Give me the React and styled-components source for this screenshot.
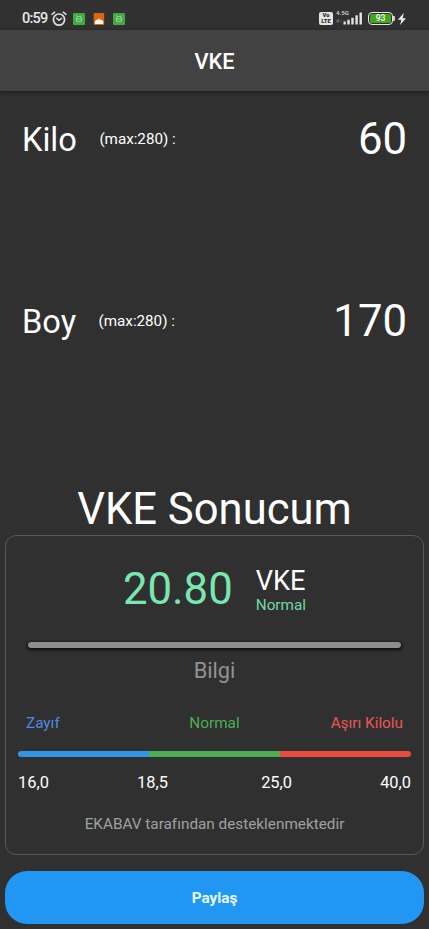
import React from "react";
import styled, { createGlobalStyle } from "styled-components";

const GlobalStyle = createGlobalStyle`
   *{
      box-sizing: border-box;
   }
   body{
      margin: 0;
      background: #303030;
      color: #fff;
      font-family: Roboto, "Noto Sans", sans-serif;
      overflow: hidden;
   }
`;

const Screen = styled.div`
   height: 929px;
   display: flex;
   flex-direction: column;
   background: #303030;
`;

// status bar
const StatusBar = styled.div`
   flex: none;
   height: 30px;
   display: flex;
   justify-content: space-between;
   align-items: center;
   padding: 7px 21px 0 22px;
   background: #313131;
`;

const StatusGroup = styled.div`
   display: flex;
   align-items: center;
   height: 16px;
   svg{
      display: block;
      flex: none;
   }
`;

const Clock = styled.span`
   width: 26px;
   margin-right: 3px;
   font-size: 14.5px;
   font-weight: 500;
   letter-spacing: -0.8px;
   line-height: 16px;
   color: #e8e8e8;
`;

const AppIcon = styled.svg`
   width: 12px;
   height: 12px;
   margin-left: ${(props) => props.$gap}px;
`;

const Volte = styled.div`
   width: 14px;
   height: 13px;
   padding-top: 1px;
   border-radius: 2px;
   background: #e4e4e4;
   color: #2a2a2a;
   font-size: 5.8px;
   font-weight: 900;
   line-height: 5.5px;
   text-align: center;
`;

const Network = styled.div`
   width: 14px;
   height: 15px;
   margin-left: 3px;
   margin-right: -7px;
   font-size: 6.2px;
   font-weight: 500;
   line-height: 5px;
   white-space: nowrap;
   color: #d8d8d8;
   small{
      display: block;
      padding-top: 3px;
      font-size: 5.5px;
      color: #858585;
   }
`;

const Battery = styled.div`
   width: 25px;
   height: 13px;
   margin-left: 5px;
   padding: 1px;
   border: 1.5px solid #e6e6e6;
   border-radius: 4px;
   span{
      display: block;
      height: 9px;
      border-radius: 1.5px;
      background: #43a51c;
      font-size: 8.5px;
      font-weight: 500;
      line-height: 9.5px;
      text-align: center;
   }
`;

const AppBar = styled.header`
   flex: none;
   height: 61px;
   display: flex;
   align-items: center;
   justify-content: center;
   background: #424242;
   box-shadow: 0 1px 4px rgba(0, 0, 0, 0.5);
   font-size: 21.8px;
   font-weight: 500;
   padding-top: 1px;
`;

// inputs
const Field = styled.div`
   flex: none;
   height: 182px;
   display: flex;
   align-items: flex-start;
   padding: 22px 22px 0;
   line-height: 52px;
`;

const FieldName = styled.span`
   padding-top: 1px;
   font-size: 32.6px;
`;

const FieldHint = styled.span`
   margin-left: 22.5px;
   font-size: 15.2px;
`;

const FieldValue = styled.span`
   margin-left: auto;
   font-size: 43.7px;
`;

const Title = styled.h1`
   flex: none;
   margin: 29px 0 0;
   height: 51px;
   font-size: 43.6px;
   font-weight: 400;
   line-height: 51px;
   text-align: center;
`;

// result
const Card = styled.section`
   flex: none;
   height: 320px;
   margin: 0 5px;
   padding: 0 12px;
   border: 1px solid #585858;
   border-radius: 11px;
`;

const Result = styled.div`
   height: 106px;
   padding-top: 27px;
   display: flex;
   justify-content: center;
   gap: 23px;
`;

const Score = styled.span`
   font-size: 43.7px;
   line-height: 52px;
   color: #7ae7b0;
`;

const ScoreInfo = styled.div`
   display: flex;
   flex-direction: column;
   font-size: 27.2px;
   line-height: 36px;
   span{
      margin-top: -2px;
      font-size: 15.3px;
      line-height: 16px;
      color: #72d8a5;
   }
`;

const Divider = styled.div`
   flex: none;
   height: 6px;
   margin: 0 10px;
   border-radius: 3px;
   background: #8b8d8e;
   box-shadow: 0 1px 3px 1px rgba(0, 0, 0, 0.75);
`;

const InfoTitle = styled.h2`
   margin: 9px 0 0;
   font-size: 21.8px;
   font-weight: 400;
   line-height: 28px;
   text-align: center;
   color: #929292;
`;

const Labels = styled.div`
   display: grid;
   grid-template-columns: 1fr 1fr 1fr;
   margin: 28px 8px 0;
   font-size: 15.3px;
   line-height: 20px;
`;

const Label = styled.span`
   color: ${(props) => props.$color};
   text-align: ${(props) => props.$align};
`;

const Scale = styled.div`
   display: flex;
   height: 6px;
   margin-top: 18px;
   border-radius: 3px;
   overflow: hidden;
`;

const Segment = styled.div`
   flex: 1;
   background: ${(props) => props.$color};
`;

const Limits = styled.div`
   display: grid;
   grid-template-columns: 119px 1fr 1fr 119px;
   margin-top: 16px;
   font-size: 16.4px;
   line-height: 20px;
   span:nth-child(n + 3){
      text-align: right;
   }
`;

const Support = styled.p`
   margin: 21px 0 0;
   font-size: 15.3px;
   line-height: 20px;
   text-align: center;
   color: #a0a0a0;
`;

const ShareButton = styled.button`
   flex: none;
   height: 53px;
   margin: 16px 5px 0;
   padding: 0;
   border: 0;
   border-radius: 22px;
   background: #2196f3;
   color: #e8faff;
   font-family: inherit;
   font-size: 15.3px;
   font-weight: 700;
`;

const AlarmIcon = () => (
   <svg width="16" height="16" viewBox="0 0 16 16" fill="none" stroke="#dedede" strokeLinecap="round">
      <circle cx="8" cy="8.6" r="5.6" strokeWidth="1.7" />
      <path d="M1 3.4 3.7 1.2M15 3.4 12.3 1.2" strokeWidth="1.5" />
      <path d="M5.6 7.2 8 9.3 10.6 7.4" strokeWidth="1.4" />
   </svg>
);

const GreenIcon = ({ gap }) => (
   <AppIcon $gap={ gap } viewBox="0 0 12 12" fill="none" stroke="#a9e5a4" strokeWidth="0.8">
      <rect width="12" height="12" rx="1" fill="#42a944" stroke="none" />
      <rect x="3.5" y="3.6" width="5" height="5.2" rx="1.8" />
      <path d="M3.6 6h4.8M4.3 3.7 3.5 2.5M7.7 3.7 8.5 2.5" />
   </AppIcon>
);

const OrangeIcon = () => (
   <AppIcon $gap={ 8 } viewBox="0 0 12 12">
      <rect x="0.7" width="10.5" height="12" rx="1" fill="#dc6414" />
      <path d="M1.8 11V8.2L4 6.5l1 .5 1-2 1.2 2 1-.5 2 1.8V11z" fill="#fff5e9" />
   </AppIcon>
);

const SignalIcon = () => (
   <svg width="20" height="13" viewBox="0 0 20 13" fill="#e4e4e4">
      <rect x="0.5" y="9.5" width="2.3" height="3" />
      <rect x="4.3" y="7.8" width="2.4" height="4.7" />
      <rect x="8.3" y="5.8" width="2.4" height="6.7" />
      <rect x="12.4" y="3.3" width="2.4" height="9.2" />
      <rect x="16.5" y="0.5" width="2.4" height="12" />
   </svg>
);

const BoltIcon = () => (
   <svg width="11" height="14" viewBox="0 0 11 14" fill="#eeeeee">
      <path d="M6.8 1 0.8 7.8H4.4L3 13l6-6.8H5.6z" />
   </svg>
);

const BatteryTip = styled.div`
   width: 2px;
   height: 5px;
   margin-right: 2px;
   border-radius: 0 1px 1px 0;
   background: #cfcfcf;
`;

const fields = [
   { name: "Kilo", value: 60 },
   { name: "Boy", value: 170 },
];

const App = () => {
   return (
      <>
         <GlobalStyle />
         <Screen>
            <StatusBar>
               <StatusGroup>
                  <Clock>0:59</Clock>
                  <AlarmIcon />
                  <GreenIcon gap={ 6 } />
                  <OrangeIcon />
                  <GreenIcon gap={ 8 } />
               </StatusGroup>
               <StatusGroup>
                  <Volte>Vo<br />LTE</Volte>
                  <Network>4.5G<small>4↑</small></Network>
                  <SignalIcon />
                  <Battery><span>93</span></Battery>
                  <BatteryTip />
                  <BoltIcon />
               </StatusGroup>
            </StatusBar>
            <AppBar>VKE</AppBar>
            { fields.map((field) => (
               <Field key={ field.name }>
                  <FieldName>{ field.name }</FieldName>
                  <FieldHint>(max:280) :</FieldHint>
                  <FieldValue>{ field.value }</FieldValue>
               </Field>
            )) }
            <Title>VKE Sonucum</Title>
            <Card>
               <Result>
                  <Score>20.80</Score>
                  <ScoreInfo>
                     VKE
                     <span>Normal</span>
                  </ScoreInfo>
               </Result>
               <Divider />
               <InfoTitle>Bilgi</InfoTitle>
               <Labels>
                  <Label $color="#5288e0" $align="left">Zayıf</Label>
                  <Label $color="#4caf50" $align="center">Normal</Label>
                  <Label $color="#ee5555" $align="right">Aşırı Kilolu</Label>
               </Labels>
               <Scale>
                  <Segment $color="#2f95e5" />
                  <Segment $color="#50ad54" />
                  <Segment $color="#ea493e" />
               </Scale>
               <Limits>
                  <span>16,0</span>
                  <span>18,5</span>
                  <span>25,0</span>
                  <span>40,0</span>
               </Limits>
               <Support>EKABAV tarafından desteklenmektedir</Support>
            </Card>
            <ShareButton>Paylaş</ShareButton>
         </Screen>
      </>
   );
}

export default App;
